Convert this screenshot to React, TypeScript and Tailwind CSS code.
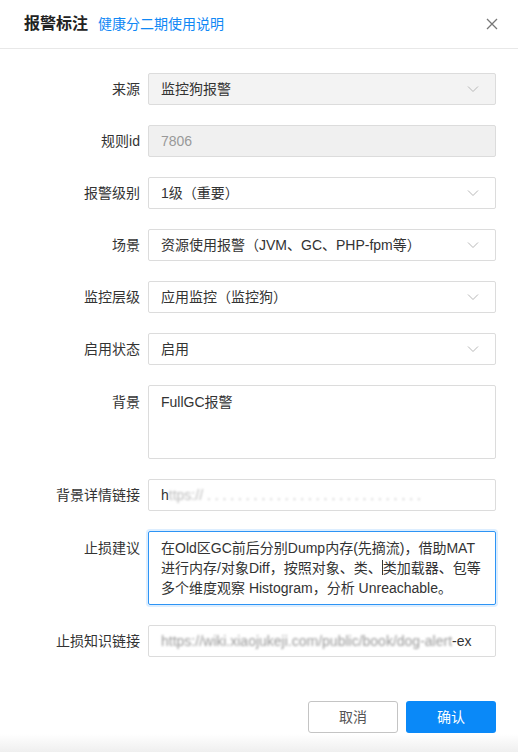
import React from 'react';

const font = { fontFamily: '"Liberation Sans", "Noto Sans CJK SC", sans-serif' };

function Chevron() {
  return (
    <svg width="12" height="8" viewBox="0 0 12 8" className="shrink-0">
      <path d="M1 1.5 L6 6.5 L11 1.5" fill="none" stroke="#b8b8b8" strokeWidth="1" />
    </svg>
  );
}

function Row({ label, top, children }: { label: string; top?: boolean; children: React.ReactNode }) {
  return (
    <div className={`flex ${top ? 'items-start' : 'items-center'} gap-2`}>
      <div className={`w-[116px] shrink-0 text-right text-[14px] text-[#333] ${top ? 'pt-[7px]' : ''}`}>{label}</div>
      <div className="flex-1 min-w-0">{children}</div>
    </div>
  );
}

function Select({ value, grey }: { value: string; grey?: boolean }) {
  return (
    <div
      className={`h-8 flex items-center justify-between pl-3 pr-4 border border-[#dcdcdc] rounded-[2px] text-[14px] text-[#333] ${
        grey ? 'bg-[#f3f3f3]' : 'bg-white'
      }`}
    >
      <span>{value}</span>
      <Chevron />
    </div>
  );
}

export default function App() {
  return (
    <div className="w-[518px] h-[752px] bg-white relative overflow-hidden" style={font}>
      {/* Header */}
      <div className="h-[49px] flex items-center justify-between pl-6 pr-5 border-b border-[#e8e8e8]">
        <div className="flex items-baseline gap-[10px]">
          <span className="text-[16px] font-semibold text-[#222]">报警标注</span>
          <span className="text-[14px] text-[#1088f5]">健康分二期使用说明</span>
        </div>
        <svg width="12" height="12" viewBox="0 0 12 12">
          <path d="M1 1 L11 11 M11 1 L1 11" stroke="#777" strokeWidth="1.3" />
        </svg>
      </div>

      {/* Form */}
      <div className="flex flex-col gap-5 pt-6 pl-6 pr-[22px]">
        <Row label="来源">
          <Select value="监控狗报警" grey />
        </Row>
        <Row label="规则id">
          <div className="h-8 flex items-center px-3 border border-[#dcdcdc] rounded-[2px] bg-[#f0f0f0] text-[14px] text-[#999]">
            7806
          </div>
        </Row>
        <Row label="报警级别">
          <Select value="1级（重要）" />
        </Row>
        <Row label="场景">
          <Select value="资源使用报警（JVM、GC、PHP-fpm等）" />
        </Row>
        <Row label="监控层级">
          <Select value="应用监控（监控狗）" />
        </Row>
        <Row label="启用状态">
          <Select value="启用" />
        </Row>
        <Row label="背景" top>
          <div className="h-[74px] border border-[#dcdcdc] rounded-[2px] px-3 pt-[6px] text-[14px] leading-5 text-[#333]">
            FullGC报警
          </div>
        </Row>
        <Row label="背景详情链接">
          <div className="h-8 flex items-center px-3 border border-[#dcdcdc] rounded-[2px] text-[14px] text-[#333] overflow-hidden whitespace-nowrap">
            <span>h</span>
            <span className="text-[#bbb] blur-[1px]">ttps:// . . . . . . . . . . . . . . . . . . . . . . . . . . . .</span>
          </div>
        </Row>
        <Row label="止损建议" top>
          <div className="h-[74px] border border-[#2d94f5] rounded-[2px] px-3 pt-[6px] text-[14px] leading-5 text-[#333] shadow-[0_0_0_2px_rgba(24,144,255,0.15)] whitespace-nowrap overflow-hidden">
            <div>在Old区GC前后分别Dump内存(先摘流)，借助MAT</div>
            <div>
              进行内存/对象Diff，按照对象、类、
              <span className="inline-block w-px h-[15px] bg-[#333] align-[-2px]" />
              类加载器、包等
            </div>
            <div>多个维度观察 Histogram，分析 Unreachable。</div>
          </div>
        </Row>
        <Row label="止损知识链接">
          <div className="h-8 flex items-center px-3 border border-[#dcdcdc] rounded-[2px] text-[14px] overflow-hidden whitespace-nowrap">
            <span className="text-[#999] blur-[0.8px]">https://wiki.xiaojukeji.com/public/book/dog-alert</span>
            <span className="text-[#333]">-ex</span>
          </div>
        </Row>
      </div>

      {/* Footer */}
      <div className="flex justify-end gap-2 pr-[22px] mt-[44px]">
        <button className="w-[90px] h-8 border border-[#c4c4c4] rounded-[3px] bg-white text-[14px] text-[#555]">
          取消
        </button>
        <button className="w-[90px] h-8 rounded-[3px] bg-[#0a89f8] text-[14px] text-white">确认</button>
      </div>

      <div className="absolute left-0 right-0 bottom-0 h-[18px] bg-gradient-to-b from-white to-[#efefef]" />
    </div>
  );
}
